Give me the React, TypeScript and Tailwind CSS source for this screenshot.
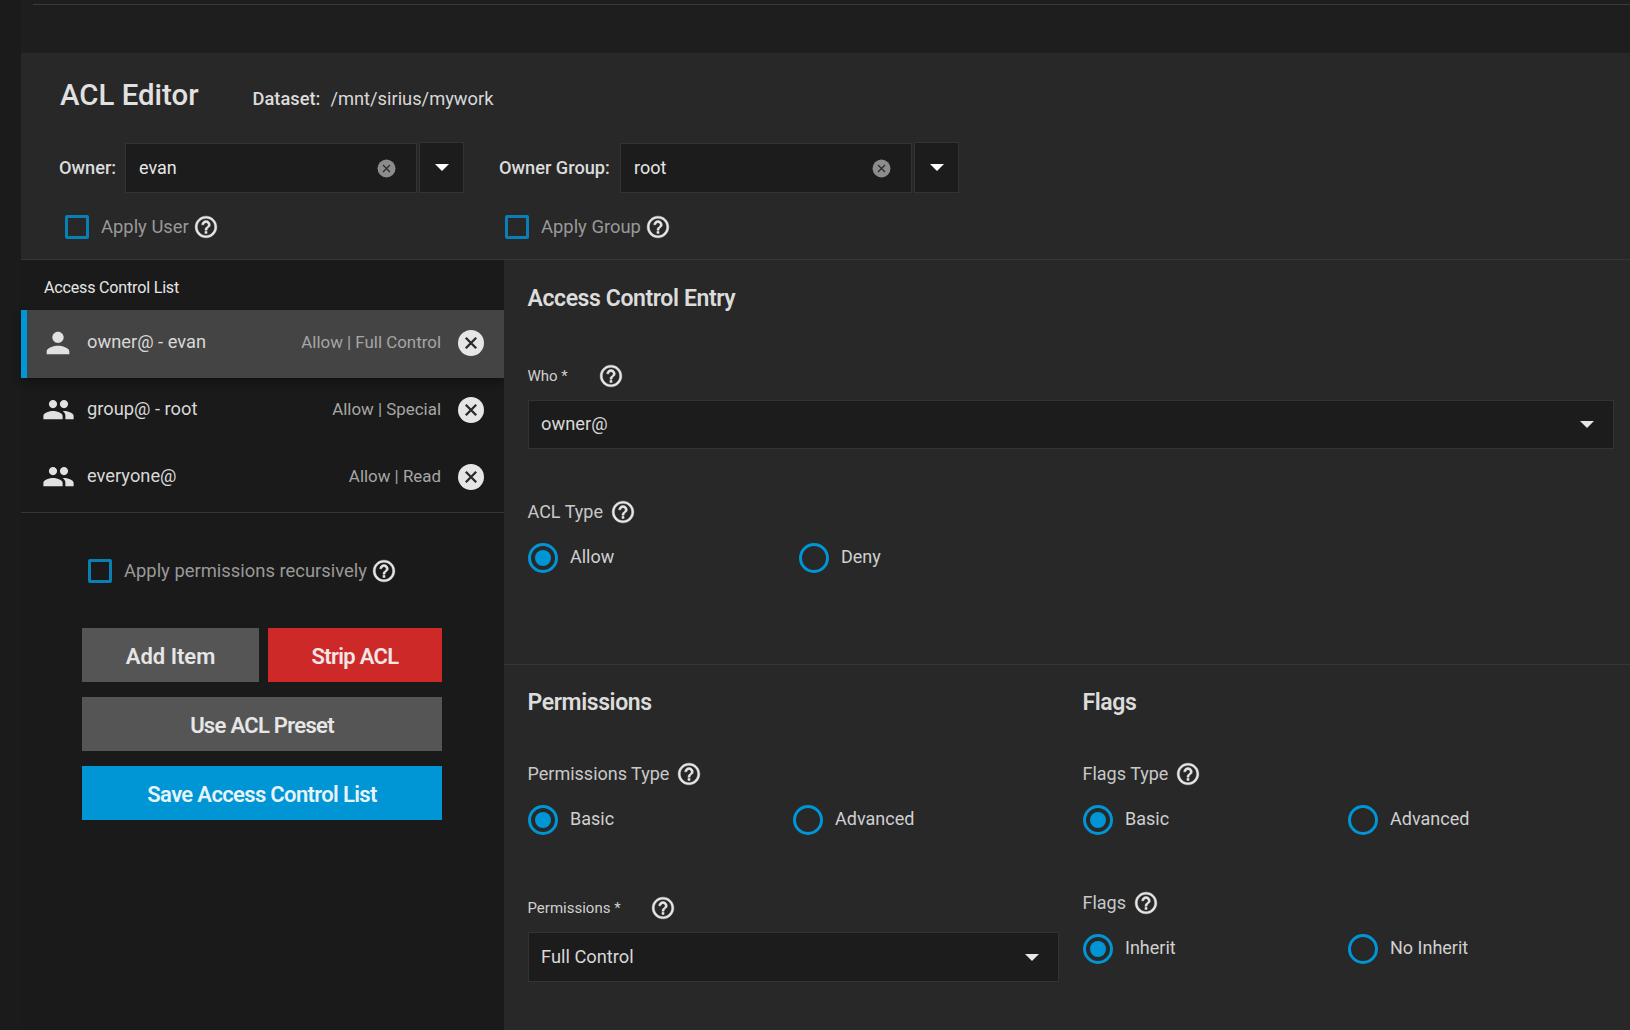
import { MdPeople, MdPerson } from "react-icons/md";

function Help({ className = "" }: { className?: string }) {
  return (
    <svg
      width="26"
      height="26"
      viewBox="0 0 24 24"
      fill="currentColor"
      stroke="currentColor"
      strokeWidth="0.4"
      className={"shrink-0 text-[#e6e6e6] " + className}
    >
      <path d="M11 18h2v-2h-2v2zm1-16C6.48 2 2 6.48 2 12s4.48 10 10 10 10-4.48 10-10S17.52 2 12 2zm0 18c-4.41 0-8-3.59-8-8s3.59-8 8-8 8 3.59 8 8-3.59 8-8 8zm0-14c-2.21 0-4 1.79-4 4h2c0-1.1.9-2 2-2s2 .9 2 2c0 2-3 1.75-3 5h2c0-2.25 3-2.5 3-5 0-2.21-1.79-4-4-4z" />
    </svg>
  );
}

function Caret({ color = "border-t-[#e6e6e6]" }: { color?: string }) {
  return <span className={"w-0 h-0 border-x-[7.5px] border-x-transparent border-t-[7.5px] " + color} />;
}

function Checkbox({ label }: { label: string }) {
  return (
    <div className="flex items-center">
      <span className="w-[24px] h-[24px] rounded-[2px] border-[3px] border-[#0a7fb5]" />
      <span className="ml-[12px] text-[18.4px] leading-[24px] text-[#999999]">{label}</span>
      <Help className="ml-[4.5px]" />
    </div>
  );
}

function Combo({ value, labelWidth, label }: { value: string; labelWidth: string; label: string }) {
  return (
    <div className="flex items-center h-[51px]">
      <span className={"text-[18.2px] font-medium text-[#dcdcdc] " + labelWidth}>{label}</span>
      <div className="w-[292px] h-[50px] flex items-center justify-between pl-[13px] pr-[20px] bg-[#1c1c1c] border border-[#333333]">
        <span className="text-[18px] text-[#e6e6e6] -mt-[1px]">{value}</span>
        <svg width="19" height="19" viewBox="0 0 19 19" className="mt-[2px]">
          <circle cx="9.5" cy="9.5" r="9" fill="#8c8c8c" />
          <path d="M6 6l7 7M13 6l-7 7" stroke="#2a2a2a" strokeWidth="1.2" />
        </svg>
      </div>
      <div className="ml-[2px] w-[45px] h-[51px] flex items-center justify-center bg-[#1c1c1c] border border-[#333333]">
        <Caret color="border-t-white" />
      </div>
    </div>
  );
}

function AclRow({
  icon,
  name,
  detail,
  active = false,
}: {
  icon: React.ReactNode;
  name: string;
  detail: string;
  active?: boolean;
}) {
  return (
    <div
      className={
        active
          ? "h-[68px] flex items-center pb-[3px] pl-[16px] pr-[20px] bg-[#444444] border-l-[6px] border-[#0095d5] shadow-[0_4px_8px_rgba(0,0,0,0.35)]"
          : "h-[67px] flex items-center pb-[4px] pl-[22px] pr-[20px]"
      }
    >
      <span className="w-[30px] flex justify-center text-[#e1e1e1]">{icon}</span>
      <span className="ml-[14px] text-[18.3px] text-[#d8d8d8] -mt-[1px]">{name}</span>
      <span className="ml-auto text-[16.9px] text-[#a6a6a6]">{detail}</span>
      <svg width="26" height="26" viewBox="0 0 26 26" className="ml-[17px]">
        <circle cx="13" cy="13" r="13" fill="#e6e6e6" />
        <path d="M7.8 7.8l10.4 10.4M18.2 7.8l-10.4 10.4" stroke="#2a2a2a" strokeWidth="2.3" />
      </svg>
    </div>
  );
}

function Radio({ label, checked = false, className = "" }: { label: string; checked?: boolean; className?: string }) {
  return (
    <div className={"flex items-center " + className}>
      <span className="w-[30px] h-[30px] rounded-full border-[3px] border-[#0095d5] flex items-center justify-center">
        {checked && <span className="w-[16px] h-[16px] rounded-full bg-[#0095d5]" />}
      </span>
      <span className="ml-[12px] text-[18px] leading-[24px] text-[#d0d0d0] -mt-[3px]">{label}</span>
    </div>
  );
}

function RadioField({ label, a, b, offset }: { label: string; a: string; b: string; offset: string }) {
  return (
    <div>
      <div className="flex items-center h-[26px] gap-[7px] -ml-[0.5px]">
        <span className="text-[18px] text-[#c8c8c8] -mt-[1px]">{label}</span>
        <Help />
      </div>
      <div className="flex mt-[18px]">
        <Radio label={a} checked className={offset} />
        <Radio label={b} />
      </div>
    </div>
  );
}

function SelectBox({ value, className = "" }: { value: string; className?: string }) {
  return (
    <div
      className={
        "flex items-center justify-between pl-[12px] pr-[19px] bg-[#1c1c1c] border border-[#333333] " + className
      }
    >
      <span className="text-[18.3px] text-[#d8d8d8] -mt-[1px]">{value}</span>
      <Caret />
    </div>
  );
}

function SectionTitle({ children }: { children: React.ReactNode }) {
  return (
    <h2 className="-ml-[0.5px] text-[23px] leading-[32px] font-semibold tracking-[-0.4px] text-[#dcdcdc]">{children}</h2>
  );
}

export default function App() {
  return (
    <div className="w-[1630px] h-[1030px] overflow-hidden flex bg-[#1e1e1e] font-['Roboto',sans-serif]">
      <div className="w-[21px] shrink-0 bg-[#1b1b1b]" />
      <div className="flex-1 flex flex-col">
        <div className="mt-[4px] ml-[12px] h-px bg-[#3a3a3a]" />
        <header className="mt-[48px] h-[207px] shrink-0 bg-[#282828] border-b border-[#363636]">
          <div className="flex items-center pl-[39px] pt-[23px] h-[61px]">
            <h1 className="text-[29.4px] font-medium leading-[36px] text-[#e1e1e1]">ACL Editor</h1>
            <span className="ml-[54px] mt-[7px] text-[18.3px] font-medium text-[#dcdcdc]">Dataset:</span>
            <span className="ml-[10px] mt-[7px] text-[18.3px] text-[#d8d8d8]">/mnt/sirius/mywork</span>
          </div>
          <div className="flex mt-[28px] pl-[38px]">
            <Combo label="Owner:" value="evan" labelWidth="w-[66px]" />
            <div className="ml-[35px]">
              <Combo label="Owner Group:" value="root" labelWidth="w-[121px]" />
            </div>
          </div>
          <div className="flex mt-[21px] pl-[44px]">
            <div className="w-[440px]">
              <Checkbox label="Apply User" />
            </div>
            <Checkbox label="Apply Group" />
          </div>
        </header>
        <div className="flex-1 flex min-h-0">
          <aside className="w-[483px] shrink-0 bg-[#1a1a1a]">
            <div className="h-[50px] flex items-center pt-[7px] pl-[23px] text-[16.1px] tracking-[-0.2px] text-[#e6e6e6]">
              Access Control List
            </div>
            <AclRow active icon={<MdPerson size={34} className="shrink-0" />} name="owner@ - evan" detail="Allow | Full Control" />
            <AclRow icon={<MdPeople size={33} className="shrink-0" />} name="group@ - root" detail="Allow | Special" />
            <AclRow icon={<MdPeople size={33} className="shrink-0" />} name="everyone@" detail="Allow | Read" />
            <div className="h-px bg-[#363636]" />
            <div className="pl-[67px] pt-[45px]">
              <Checkbox label="Apply permissions recursively" />
            </div>
            <div className="mx-[61px] w-[360px] mt-[44px] flex flex-col gap-[15px]">
              <div className="flex gap-[9px]">
                <button className="w-[177px] h-[54px] pt-[2px] bg-[#555555] text-[22px] font-semibold text-[#e6e6e6]">Add Item</button>
                <button className="w-[174px] h-[54px] pt-[2px] bg-[#ce2929] text-[22px] font-semibold tracking-[-0.7px] text-[#f0e6e6]">Strip ACL</button>
              </div>
              <button className="h-[54px] pt-[2px] bg-[#555555] text-[22px] font-semibold tracking-[-0.7px] text-[#e6e6e6]">Use ACL Preset</button>
              <button className="h-[54px] pt-[2px] bg-[#0095d5] text-[22px] font-semibold tracking-[-0.65px] text-[#e6f4fa]">Save Access Control List</button>
            </div>
          </aside>
          <main className="flex-1 bg-[#282828]">
            <section className="h-[405px] border-b border-[#363636] pl-[24px] pr-[16px] pt-[23px]">
              <SectionTitle>Access Control Entry</SectionTitle>
              <div className="mt-[48px] flex items-center h-[26px] -ml-[0.5px]">
                <span className="w-[70px] text-[15px] text-[#d0d0d0]">Who *</span>
                <Help />
              </div>
              <SelectBox value="owner@" className="mt-[11px] h-[49px]" />
              <div className="mt-[50px]">
                <RadioField label="ACL Type" a="Allow" b="Deny" offset="w-[271px]" />
              </div>
            </section>
            <section className="grid grid-cols-2 gap-x-[24px] pl-[24px] pr-[16px] pt-[22px]">
              <div>
                <SectionTitle>Permissions</SectionTitle>
                <div className="mt-[42px]">
                  <RadioField label="Permissions Type" a="Basic" b="Advanced" offset="w-[265px]" />
                </div>
                <div className="mt-[60px] flex items-center h-[26px] -ml-[0.5px]">
                  <span className="w-[122px] text-[15px] text-[#d0d0d0]">Permissions *</span>
                  <Help />
                </div>
                <SelectBox value="Full Control" className="mt-[11px] h-[50px]" />
              </div>
              <div>
                <SectionTitle>Flags</SectionTitle>
                <div className="mt-[42px]">
                  <RadioField label="Flags Type" a="Basic" b="Advanced" offset="w-[265px]" />
                </div>
                <div className="mt-[55px]">
                  <RadioField label="Flags" a="Inherit" b="No Inherit" offset="w-[265px]" />
                </div>
              </div>
            </section>
          </main>
        </div>
      </div>
    </div>
  );
}
